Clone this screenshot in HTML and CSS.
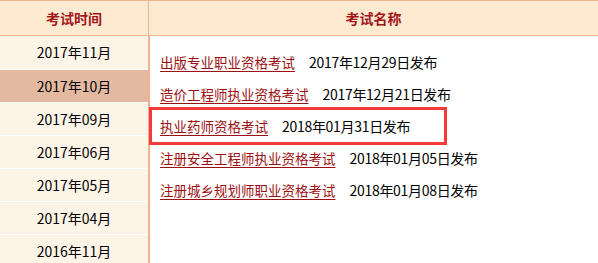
FILE: index.html
```html
<!DOCTYPE html>
<html lang="zh-CN">
<head>
    <meta charset="UTF-8">
    <meta name="viewport" content="width=device-width, initial-scale=1.0">
    <title>考试时间</title>
    <link rel="stylesheet" href="styles.css">
</head>
<body>
    <div class="board">
        <div class="head">
            <div class="head-cell side">考试时间</div>
            <div class="head-cell main">考试名称</div>
        </div>
        <div class="content">
            <ul class="months">
                <li>2017年11月</li>
                <li class="active">2017年10月</li>
                <li>2017年09月</li>
                <li>2017年06月</li>
                <li>2017年05月</li>
                <li>2017年04月</li>
                <li>2016年11月</li>
            </ul>
            <div class="exams">
                <div class="exam"><a href="#">出版专业职业资格考试</a><span class="date">2017年12月29日发布</span></div>
                <div class="exam"><a href="#">造价工程师执业资格考试</a><span class="date">2017年12月21日发布</span></div>
                <div class="exam"><a href="#">执业药师资格考试</a><span class="date">2018年01月31日发布</span></div>
                <div class="exam"><a href="#">注册安全工程师执业资格考试</a><span class="date">2018年01月05日发布</span></div>
                <div class="exam"><a href="#">注册城乡规划师职业资格考试</a><span class="date">2018年01月08日发布</span></div>
                <div class="mark"></div>
            </div>
        </div>
    </div>
</body>
</html>
```
FILE: styles.css
```css
body {
    margin: 0;
    font-family: "Noto Sans CJK SC", "Liberation Sans", sans-serif;
    font-size: 14px;
    color: #000;
    background-color: #fff;
}

.board {
    display: flex;
    flex-direction: column;
    height: 100vh;
    overflow: hidden;
}

.head {
    display: flex;
    flex-shrink: 0;
    height: 34px;
    background-color: #fdead1;
    border-top: 1px solid #efb48f;
    border-bottom: 1px solid #efb48f;
}

.head-cell {
    display: flex;
    align-items: center;
    justify-content: center;
    color: #a3161a;
    font-weight: bold;
    font-size: 14px;
}

.head-cell.side {
    width: 148px;
}

.head-cell.main {
    flex: 1;
    border-left: 1px solid #efb48f;
}

.content {
    display: flex;
    flex: 1;
    min-height: 0;
}

.months {
    list-style: none;
    margin: 0;
    padding: 0;
    width: 148px;
    background-color: #fdf4e8;
}

.months li {
    height: 32px;
    line-height: 32px;
    text-align: center;
    border-bottom: 1px solid #fff;
}

.months li:first-child {
    height: 33px;
    line-height: 33px;
}

.months li.active {
    background-color: #e3b9a0;
}

.exams {
    position: relative;
    flex: 1;
    border-left: 2px solid #efb48f;
    padding: 10px 0 0 10px;
}

.exam {
    display: flex;
    align-items: center;
    height: 32px;
    white-space: nowrap;
}

.exam a {
    color: #9c0f12;
    font-size: 13.5px;
    text-decoration: underline;
    text-underline-offset: 3px;
}

.date {
    margin-left: 14px;
    letter-spacing: -0.3px;
}

/* red highlight box over the third row */
.mark {
    position: absolute;
    left: -1px;
    top: 71px;
    width: 292px;
    height: 32px;
    border: 3px solid #f43a3a;
}
```
